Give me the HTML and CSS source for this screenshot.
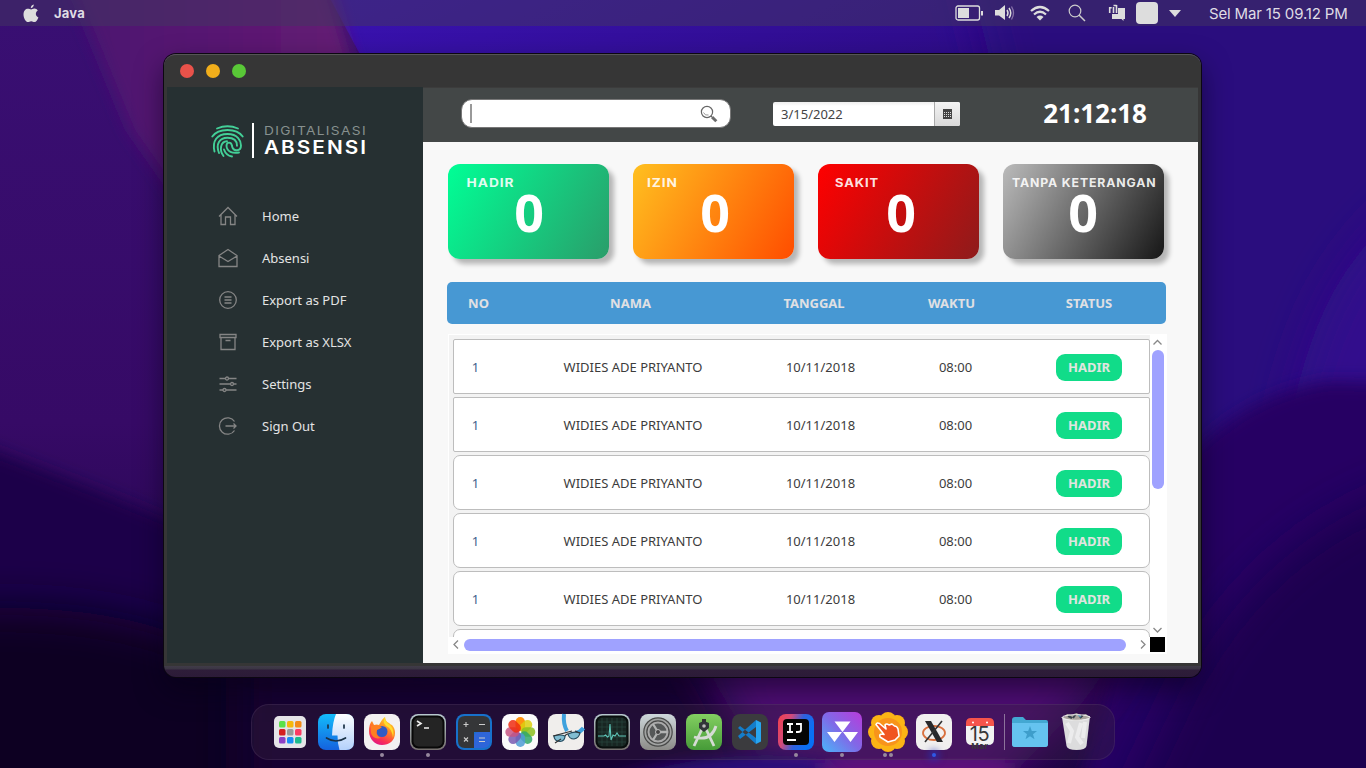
FILE: index.html
```html
<!DOCTYPE html>
<html lang="id">
<head>
<meta charset="utf-8">
<title>Digitalisasi Absensi</title>
<link rel="stylesheet" href="styles.css">
</head>
<body>
<div class="desktop">
<svg class="wallpaper" viewBox="0 0 1366 768" preserveAspectRatio="none" aria-hidden="true">
  <defs>
    <linearGradient id="wl" x1="0" y1="0" x2="0" y2="1"><stop offset="0" stop-color="#390f73"/><stop offset=".55" stop-color="#360a66"/><stop offset="1" stop-color="#1b0442"/></linearGradient>
    <linearGradient id="wr" x1="0" y1="0" x2="1" y2="1"><stop offset="0" stop-color="#3a12b4"/><stop offset=".45" stop-color="#2c0b80"/><stop offset="1" stop-color="#2d0d7d"/></linearGradient>
    <linearGradient id="wm" x1="0" y1="0" x2="1" y2="0"><stop offset="0" stop-color="#4a1270"/><stop offset=".6" stop-color="#621b73"/><stop offset="1" stop-color="#74266f"/></linearGradient>
    <filter id="b6" x="-20%" y="-20%" width="140%" height="140%"><feGaussianBlur stdDeviation="8"/></filter>
    <filter id="b14" x="-60%" y="-60%" width="220%" height="220%"><feGaussianBlur stdDeviation="22"/></filter>
  </defs>
  <rect width="1366" height="768" fill="url(#wl)"/>
  <path d="M320-20H1400V500H600Z" fill="url(#wr)"/>
  <path d="M960-60H1440V500H1100Z" fill="#2c0a7e" filter="url(#b14)"/>
  <path d="M60-40H322L352 60 500 300H250L130 130Z" fill="url(#wm)" filter="url(#b6)"/>
  <path d="M1440 180Q1350 240 1316 330T1290 480H1440Z" fill="#33118c" filter="url(#b14)"/>
  <path d="M1160 490Q1230 395 1330 381L1440 384V860H1060Z" fill="#260663" filter="url(#b6)"/>
  <path d="M1180 690Q1270 520 1440 480V860H1100Z" fill="#1c0450" filter="url(#b14)"/>
  <path d="M-60 430Q70 478 170 520L400 650 440 860H-60Z" fill="#1d0448" filter="url(#b6)"/>
  <path d="M-60 610Q100 600 190 640L520 700V860H-60Z" fill="#0e0223" filter="url(#b14)"/>
  <path d="M240 660H700L780 860H240Z" fill="#140330" filter="url(#b14)"/>
  <path d="M690 640H1130L1080 705 930 860H820Z" fill="#4f0f74" filter="url(#b14)"/>
  <path d="M560 800Q700 740 830 760L870 800Z" fill="#2c087c" filter="url(#b6)"/>
  <path d="M820 763H1010V790H820Z" fill="#63127e" filter="url(#b6)"/>
</svg>

<header class="menubar">
  <svg class="apple" viewBox="0 0 16 19"><path d="M10.800.5c.1 1.600-1.200 3.600-3 3.800C7.600 2.600 9 .8 10.800.5ZM8.100 5.500c.8 0 1.700-.9 3.300-.9 1.500 0 2.700.8 3.400 1.900-2.900 1.800-2.400 5.700.6 6.900-.7 2.100-2.100 4.600-3.900 4.700-1.300 0-1.700-.8-3.300-.8s-2 .8-3.200.8C2.500 18 .5 13.900.5 10.500c0-3.700 2.200-5.700 4.400-5.700 1.400 0 2.400.7 3.200.7Z"/></svg>
  <span class="app-name">Java</span>
  <div class="tray">
    <svg width="29" height="18" viewBox="0 0 29 18"><rect x="1" y="2" width="23.500" height="14" rx="2" fill="none" stroke="#ddd" stroke-width="1.300"/><rect x="3" y="4" width="11" height="10" fill="#ddd"/><rect x="26" y="7" width="2" height="4.500" fill="#ddd"/></svg>
    <svg width="20" height="18" viewBox="0 0 20 18"><path d="M0 6h4l6-5v15l-6-4.500H0Z" fill="#ddd"/><path d="M12 6q2 3 0 6M14 4q3.500 5 0 10" fill="none" stroke="#ddd" stroke-width="1.500"/><path d="M16.500 2.500q4 6.500 0 13" fill="none" stroke="#8773a8" stroke-width="1.300"/></svg>
    <svg width="20" height="18" viewBox="0 0 20 18"><path d="M1 7q9-8 18 0M4 10.500q6-5.500 12 0" fill="none" stroke="#ddd" stroke-width="2.200"/><path d="M6.500 13q3.500-2.800 7 0L10 16.500Z" fill="#ddd"/></svg>
    <svg width="18" height="18" viewBox="0 0 18 18"><circle cx="7" cy="7" r="5.800" fill="none" stroke="#ccc" stroke-width="1.200"/><path d="m11 11 6 6" stroke="#ccc" stroke-width="1.500"/></svg>
    <svg width="18" height="18" viewBox="0 0 18 18"><path d="M10 4h7v11h-1.500v2l-2-2H4v-5h6Z" fill="#ddd"/><path d="M1.700 9V3.700h2M5.500 3v6M5.500 1.500h3M8.500 1v8" fill="none" stroke="#ddd" stroke-width="1.600"/></svg>
    <i class="tray-box"></i>
    <svg width="12" height="7" viewBox="0 0 12 7"><path d="M0 0h12L6 7Z" fill="#ddd"/></svg>
  </div>
  <time class="clock">Sel Mar 15 09.12 PM</time>
</header>

<main class="window">
  <div class="titlebar"><i class="light close"></i><i class="light minimize"></i><i class="light maximize"></i></div>
  <div class="frame">
    <aside class="sidebar">
      <svg class="logo" viewBox="0 0 156 36">
        <g fill="none" stroke="#43cf97" stroke-width="1.900" stroke-linecap="round">
          <path d="M6 5.500Q16.500 1 27 5.500"/>
          <path d="M1.300 13.500Q6 7 16.500 7T31.700 13.500"/>
          <path d="M3.500 28.500C1 18 6 11 16.500 11S30 18 30 22.500C30 28.500 22 29 21 23 20.500 18.500 15.500 18.500 15.500 23 16 29 21.500 30.500 28 29.500"/>
          <path d="M8 30C4.500 21 8.500 14.800 16.500 14.800S26 19.500 26 22.800"/>
          <path d="M12.500 33C8 27 9.500 18.500 16 18.300"/>
          <path d="M13 26.500Q15 32.500 21 33.500"/>
        </g>
        <rect x="41" y="0" width="2" height="35" fill="#fff"/>
        <text x="53" y="12" class="logo-top" textLength="103" lengthAdjust="spacingAndGlyphs">DIGITALISASI</text>
        <text x="53" y="31" class="logo-bottom" textLength="104" lengthAdjust="spacingAndGlyphs">ABSENSI</text>
      </svg>
      <nav class="menu">
        <a class="menu-item"><svg viewBox="0 0 20 20"><path d="M1 10.500 10 1.500l9 9M3 9v9.500h4.500V11h5v7.500H17V9"/></svg>Home</a>
        <a class="menu-item"><svg viewBox="0 0 20 20"><path d="M1 7.500 10 1.500l9 6v11H1ZM1 8l9 5.500L19 8"/></svg>Absensi</a>
        <a class="menu-item"><svg viewBox="0 0 20 20"><circle cx="10" cy="10" r="8.300"/><path d="M6.500 7h7M6.500 10h7M6.500 13h7"/></svg>Export as PDF</a>
        <a class="menu-item"><svg viewBox="0 0 20 20"><path d="M2 2.500h16v3H2ZM3 5.500h14v12H3ZM7.500 8.500h5"/></svg>Export as XLSX</a>
        <a class="menu-item"><svg viewBox="0 0 20 20"><path d="M1.500 4.500H7.500M10.500 4.500h8M1.500 10H12.500M15.500 10h3M1.500 16H5M8 16h10.500"/><circle cx="9" cy="4.500" r="1.500"/><circle cx="14" cy="10" r="1.500"/><circle cx="6.500" cy="16" r="1.500"/></svg>Settings</a>
        <a class="menu-item"><svg viewBox="0 0 20 20"><path d="M16.500 5.500A8.200 8.200 0 1 0 16.500 14.500M7.500 10h10.500M15.500 7.500 18 10l-2.500 2.500"/></svg>Sign Out</a>
      </nav>
    </aside>

    <section class="content">
      <div class="topbar">
        <div class="search"><i class="caret"></i><svg viewBox="0 0 18 18"><circle cx="7" cy="7" r="5.600" fill="#fff" stroke="#666" stroke-width="1.200"/><path d="M3.500 7.500Q5 11 8.500 10" fill="none" stroke="#999"/><path d="m11 11 1.500 1.500" stroke="#666"/><path d="m12 12 4.300 4.300" stroke="#6b6b6b" stroke-width="3"/></svg></div>
        <div class="date"><span class="date-value">3/15/2022</span><span class="date-button"><svg viewBox="0 0 10 10" shape-rendering="crispEdges"><path d="M0 0h9v10H0Z" fill="#444"/><path d="M1 3.500h8M1 5.500h8M1 7.500h8" stroke="#ddd" stroke-width="1" stroke-dasharray="1 1"/></svg></span></div>
        <div class="time">21:12:18</div>
      </div>

      <div class="cards">
        <div class="card hadir"><svg class="card-label" viewBox="0 0 161 14"><text x="18.500" y="11.500" textLength="48" lengthAdjust="spacingAndGlyphs">HADIR</text></svg><b>0</b></div>
        <div class="card izin"><svg class="card-label" viewBox="0 0 161 14"><text x="14" y="11.500" textLength="31" lengthAdjust="spacingAndGlyphs">IZIN</text></svg><b>0</b></div>
        <div class="card sakit"><svg class="card-label" viewBox="0 0 161 14"><text x="17" y="11.500" textLength="44" lengthAdjust="spacingAndGlyphs">SAKIT</text></svg><b>0</b></div>
        <div class="card tanpa"><svg class="card-label" viewBox="0 0 161 14"><text x="9" y="11.500" textLength="144.500" lengthAdjust="spacingAndGlyphs">TANPA KETERANGAN</text></svg><b>0</b></div>
      </div>

      <div class="table-head"><span>NO</span><span>NAMA</span><span>TANGGAL</span><span>WAKTU</span><span>STATUS</span></div>

      <div class="list">
        <div class="rows">
          <div class="row square"><span>1</span><span>WIDIES ADE PRIYANTO</span><span>10/11/2018</span><span>08:00</span><em>HADIR</em></div>
          <div class="row square"><span>1</span><span>WIDIES ADE PRIYANTO</span><span>10/11/2018</span><span>08:00</span><em>HADIR</em></div>
          <div class="row"><span>1</span><span>WIDIES ADE PRIYANTO</span><span>10/11/2018</span><span>08:00</span><em>HADIR</em></div>
          <div class="row"><span>1</span><span>WIDIES ADE PRIYANTO</span><span>10/11/2018</span><span>08:00</span><em>HADIR</em></div>
          <div class="row"><span>1</span><span>WIDIES ADE PRIYANTO</span><span>10/11/2018</span><span>08:00</span><em>HADIR</em></div>
          <div class="row"></div>
        </div>
        <div class="vbar"><svg viewBox="0 0 15 15"><path d="m3.500 9.500 4-4 4 4"/></svg><i></i><svg viewBox="0 0 15 15"><path d="m3.500 6 4 4 4-4"/></svg></div>
        <div class="hbar"><svg viewBox="0 0 15 15"><path d="m9 3.500-4 4 4 4"/></svg><i></i><svg viewBox="0 0 15 15"><path d="m6 3.500 4 4-4 4"/></svg></div>
        <div class="corner"></div>
      </div>
    </section>
  </div>
</main>

<footer class="dock">
  <div class="dock-item"><svg viewBox="0 0 36 36"><rect x="2" y="2" width="32" height="32" rx="5" fill="#e5e4e8"/>
    <rect x="7" y="7" width="6.500" height="6.500" rx="1.500" fill="#5be04a"/><rect x="15" y="7" width="6.500" height="6.500" rx="1.500" fill="#f5b80d"/><rect x="23" y="7" width="6.500" height="6.500" rx="1.500" fill="#f38b18"/>
    <rect x="7" y="15" width="6.500" height="6.500" rx="1.500" fill="#d51f20"/><rect x="15" y="15" width="6.500" height="6.500" rx="1.500" fill="#999"/><rect x="23" y="15" width="6.500" height="6.500" rx="1.500" fill="#fb3b62"/>
    <rect x="7" y="23" width="6.500" height="6.500" rx="1.500" fill="#8c3fc5"/><rect x="15" y="23" width="6.500" height="6.500" rx="1.500" fill="#188cf5"/><rect x="23" y="23" width="6.500" height="6.500" rx="1.500" fill="#1cba8d"/></svg></div>
  <div class="dock-item"><svg viewBox="0 0 36 36"><defs><linearGradient id="fi" x1="0" y1="0" x2="0" y2="1"><stop stop-color="#13bcfb"/><stop offset="1" stop-color="#1462de"/></linearGradient><linearGradient id="fw" x1="0" y1="0" x2="0" y2="1"><stop stop-color="#fdfeff"/><stop offset="1" stop-color="#b4d1fb"/></linearGradient></defs><rect width="36" height="36" rx="8" fill="url(#fi)"/><path d="M18 0h10q8 0 8 8v20q0 8-8 8h-6.500q-2-6-2-14.500H14Q14.500 8 18 0Z" fill="url(#fw)"/><path d="M10 11v3M26 11v3M8.500 24q9.500 6 19 0" fill="none" stroke="#1a3145" stroke-width="1.700" stroke-linecap="round"/></svg></div>
  <div class="dock-item"><svg viewBox="0 0 36 36"><defs><linearGradient id="ff" x1=".8" y1="0" x2=".3" y2="1"><stop stop-color="#ffe12e"/><stop offset=".45" stop-color="#ff8222"/><stop offset=".8" stop-color="#f92c57"/><stop offset="1" stop-color="#df1888"/></linearGradient></defs><rect width="36" height="36" rx="8" fill="#f3f1f1"/><path d="M5 17Q5 10 8 7l2 4q3-1 5 0 3-6 6-8 0 4 4 6 2 2 3 2 3 3 3 8c0 8-6 12-13 12S5 25 5 17Z" fill="url(#ff)"/><circle cx="18" cy="17.500" r="5.500" fill="#315bc4"/><path d="M7 12q5-2 11 1-2 2-5 3-2 6 4 8-8 2-10-5Z" fill="#ff7f22"/><path d="M21 3q0 5 5 8 5 5 3 13-1-10-7-12-4-4-1-9Z" fill="#ffdc2b"/></svg><i class="dots"></i></div>
  <div class="dock-item"><svg viewBox="0 0 36 36"><defs><linearGradient id="metal" x2="0" y2="1"><stop stop-color="#b8c9cf"/><stop offset="1" stop-color="#77716f"/></linearGradient></defs><rect width="36" height="36" rx="8" fill="url(#metal)"/><rect x="1.500" y="1.500" width="33" height="33" rx="7" fill="#080808"/><rect x="3.500" y="3.500" width="29" height="29" rx="5" fill="#242424"/><path d="m7 7 4 2.500L7 12M14 14h5" fill="none" stroke="#eee" stroke-width="1.600"/></svg><i class="dots"></i></div>
  <div class="dock-item"><svg viewBox="0 0 36 36"><rect width="36" height="36" rx="8" fill="#1771cb"/><path d="M2 9q0-7 7-7h18q7 0 7 7v9H18v16H9q-7 0-7-7Z" fill="#353638"/><path d="M18 34V23q0-5 5-5h11v9q0 7-7 7Z" fill="#2e65d9"/><path d="M7.500 10.500h5M10 8v5M23 10.500h6M8 23.500l4 4M12 23.500l-4 4M23 24h6M23 27.500h6" stroke="#ccc" stroke-width="1.100"/></svg></div>
  <div class="dock-item"><svg viewBox="0 0 36 36"><rect width="36" height="36" rx="8" fill="#fbfbfb"/><g><rect x="13.500" y="3" width="9.500" height="14" rx="4.700" fill="#ff9210"/><rect x="13.500" y="3" width="9.500" height="14" rx="4.700" fill="#ddcf10" fill-opacity=".85" transform="rotate(45 18.300 18)"/><rect x="13.500" y="3" width="9.500" height="14" rx="4.700" fill="#8cc01e" fill-opacity=".85" transform="rotate(90 18.300 18)"/><rect x="13.500" y="3" width="9.500" height="14" rx="4.700" fill="#30a868" fill-opacity=".85" transform="rotate(135 18.300 18)"/><rect x="13.500" y="3" width="9.500" height="14" rx="4.700" fill="#4c9bd4" fill-opacity=".85" transform="rotate(180 18.300 18)"/><rect x="13.500" y="3" width="9.500" height="14" rx="4.700" fill="#7759b0" fill-opacity=".85" transform="rotate(225 18.300 18)"/><rect x="13.500" y="3" width="9.500" height="14" rx="4.700" fill="#c65383" fill-opacity=".85" transform="rotate(270 18.300 18)"/><rect x="13.500" y="3" width="9.500" height="14" rx="4.700" fill="#ee2d12" fill-opacity=".85" transform="rotate(315 18.300 18)"/></g></svg></div>
  <div class="dock-item"><svg viewBox="0 0 36 36"><rect width="36" height="36" rx="8" fill="#f0eeec"/><path d="M16 0q-1 10 3 17M35.500 14q-3 4-8 5" fill="none" stroke="#3ea1dd" stroke-width="4"/><path d="M6 22q6-2 11 0 0 5-5 5.500Q6 27 6 22ZM20 20q6-3 12-1-1 5-6 6-5 0-6-5Z" fill="#81bdd2" stroke="#234b60" stroke-width="1.200"/><path d="M17 22q1-2 3-2M5 22l19-5M32 19l-5-2M13 25l-6 4" fill="none" stroke="#333" stroke-width="1.200"/></svg></div>
  <div class="dock-item"><svg viewBox="0 0 36 36"><rect width="36" height="36" rx="8" fill="url(#metal)"/><rect x="1.500" y="1.500" width="33" height="33" rx="7" fill="#080e0d"/><rect x="3.500" y="3.500" width="29" height="29" rx="5" fill="#182522"/><path d="M8 4v28M13 4v28M18 4v28M23 4v28M28 4v28M4 8h28M4 13h28M4 18h28M4 23h28M4 28h28" stroke="#29463e" stroke-width=".7"/><path d="M4 22h6l1.500-1 2 2 1.500-1 1-12 1 16 2-5 2 1 2-3 2 3h7" fill="none" stroke="#5ec5b8" stroke-width="1.100"/></svg></div>
  <div class="dock-item"><svg viewBox="0 0 36 36"><defs><linearGradient id="se" x2="0" y2="1"><stop stop-color="#ced7db"/><stop offset="1" stop-color="#8b8b87"/></linearGradient></defs><rect width="36" height="36" rx="8" fill="url(#se)"/><circle cx="18" cy="18" r="14.800" fill="#484948"/><circle cx="18" cy="18" r="12.700" fill="none" stroke="#a1a3a2" stroke-width="1.800"/><circle cx="18" cy="18" r="9.500" fill="#555858" stroke="#aaa" stroke-width="2"/><path d="M18 18h9.500M18 18l-5-8M18 18l-5 8" stroke="#b2b4b3" stroke-width="2.300"/><circle cx="18" cy="18" r="2.500" fill="#444" stroke="#bbb"/></svg></div>
  <div class="dock-item"><svg viewBox="0 0 36 36"><defs><linearGradient id="as" x2="0" y2="1"><stop stop-color="#83cf61"/><stop offset="1" stop-color="#469b38"/></linearGradient></defs><rect width="36" height="36" rx="8" fill="url(#as)"/><path d="M16 15 8 32M20 15l8 17M8 23q17 5 22-11" fill="none" stroke="#d5dbd4" stroke-width="2.800"/><rect x="16" y="5" width="4" height="6" fill="#333"/><path d="m13 9 5-2 5 2v5l-5 4-5-4Z" fill="#303738"/><circle cx="18" cy="12" r="1.800" fill="#bbb"/></svg></div>
  <div class="dock-item"><svg viewBox="0 0 36 36"><rect width="36" height="36" rx="8" fill="#3b3b3e"/><path d="m24 6 5 2.500v19L24 30Z" fill="#28a5ee"/><path d="m6 14 2-2 16 12v6ZM6 22l2 3L24 13V6Z" fill="#147dca"/></svg></div>
  <div class="dock-item"><svg viewBox="0 0 36 36"><defs><linearGradient id="ij" x1="0" y1="0" x2="1" y2=".35"><stop stop-color="#f5404a"/><stop offset=".35" stop-color="#d24a7b"/><stop offset=".65" stop-color="#3260dc"/><stop offset="1" stop-color="#0870f5"/></linearGradient></defs><rect width="36" height="36" rx="8" fill="url(#ij)"/><rect x="5" y="5" width="26" height="26" rx="4" fill="#050505"/><path d="M9 10h6M12 10v8M9 18h6M18 10h5v6q0 2-3 2h-2M9 26h9" fill="none" stroke="#fff" stroke-width="1.800"/></svg><i class="dots"></i></div>
  <div class="dock-item"><svg class="large" viewBox="0 0 40 40"><defs><linearGradient id="tri" x1="1" y1="0" x2="0" y2="1"><stop stop-color="#b83bdb"/><stop offset=".5" stop-color="#8069e7"/><stop offset="1" stop-color="#49b5fa"/></linearGradient></defs><rect width="40" height="40" rx="7" fill="url(#tri)"/><path d="M12.500 9.500h16L20.500 20ZM5 20h15L12.500 30ZM21 20h15L28.500 30Z" fill="#fff"/></svg><i class="dots"></i></div>
  <div class="dock-item"><svg class="large" viewBox="0 0 40 40"><g fill="#fcb415"><circle cx="20" cy="8" r="8"/><circle cx="20" cy="32" r="8"/><circle cx="8" cy="20" r="8"/><circle cx="32" cy="20" r="8"/><circle cx="11" cy="11" r="8"/><circle cx="29" cy="11" r="8"/><circle cx="11" cy="29" r="8"/><circle cx="29" cy="29" r="8"/></g><circle cx="20" cy="20" r="14" fill="#f8941b"/><path d="M8 12.500Q9 10 11.500 11.500L18 17 17 13Q18.500 11 21 13L24 12 26.500 14Q29 14 30 17L31 24 27 28 20 30 12 25Q11 22 14 22L16 22.500Z" fill="#f0551f" stroke="#fff" stroke-width="1.600" stroke-linejoin="round"/></svg><i class="dots two"></i></div>
  <div class="dock-item"><svg viewBox="0 0 36 36"><rect width="36" height="36" rx="8" fill="#f1f0ef"/><ellipse cx="18" cy="19" rx="11" ry="7" fill="none" stroke="#d9703d" stroke-width="1.800"/><path d="M9 7h6l12 21h-6Z" fill="#28292b"/><path d="M26 7 9 28" stroke="#333" stroke-width="1.600"/></svg><i class="dots active"></i></div>
  <div class="dock-item"><svg viewBox="0 0 36 36"><path d="M4 12h28v13q0 6-6 6H10q-6 0-6-6Z" fill="#f2f2f2"/><path d="M4 12V9q0-5 5-5h18q5 0 5 5v3Z" fill="#f6544b"/><circle cx="11" cy="8.500" r="1" fill="#fff"/><circle cx="25" cy="8.500" r="1" fill="#fff"/><text x="17.500" y="27" class="day">15</text><text x="17.500" y="35" class="month">Mar</text></svg></div>
  <i class="separator"></i>
  <div class="dock-item"><svg viewBox="0 0 36 36"><path d="M0 6q0-3 3-3h8l3 3h20q2 0 2 2v22q0 3-3 3H3q-3 0-3-3Z" fill="#43a8d2"/><path d="M0 9h36v21q0 3-3 3H3q-3 0-3-3Z" fill="#65c3ef"/><path d="m18 12 1.800 5h5.200l-4 3.200 1.500 5-4.500-3-4.500 3 1.500-5-4-3.200h5.200Z" fill="#3e9ecb"/></svg></div>
  <div class="dock-item"><svg class="large" viewBox="0 0 40 40"><path d="m6 5 28-1-3.500 30q-1 4-10 4t-10-4Z" fill="#dcdcdd"/><path d="m11 11 5 8-3 12M25 11l-4 14 5 7M29 10l-2 16" fill="none" stroke="#ececed" stroke-width="4"/><path d="m7 6 4-4 5 1 4-2 5 2 5-1 4 4-14 3Z" fill="#aaa49d"/><path d="m12 4 4 2M20 2l-3 4M27 3l-3 3" stroke="#39434c" stroke-width="2"/><path d="m22 3 3 2" stroke="#4a91b0" stroke-width="1.500"/><ellipse cx="20" cy="5.500" rx="14" ry="2.800" fill="none" stroke="#eee"/></svg></div>
</footer>
</div>
</body>
</html>
```
FILE: styles.css
```css
* { box-sizing: border-box; }
body { margin: 0; font-family: "Noto Sans", sans-serif; }
svg { display: block; flex: none; }
i, em { font-style: normal; }

.desktop {
  position: relative;
  width: 1366px;
  height: 768px;
  overflow: hidden;
  display: flex;
  flex-direction: column;
  align-items: center;
  isolation: isolate;
}
.wallpaper { position: absolute; inset: 0; width: 100%; height: 100%; z-index: -1; }

/* Menu bar */
.menubar {
  width: 100%;
  height: 26px;
  flex: none;
  display: flex;
  align-items: center;
  padding: 0 18px 0 23px;
  background: rgba(66, 54, 96, .5);
  color: #dfdce4;
  font-family: Inter, sans-serif;
}
.apple { width: 16px; height: 19px; fill: #ddd; }
.app-name { margin-left: 15px; font-size: 13px; font-weight: 700; letter-spacing: .2px; }
.tray { margin-left: auto; display: flex; align-items: center; }
.tray svg:first-child { margin-left: -1px; }
.tray svg:nth-child(2) { margin-left: 11px; }
.tray svg:nth-child(3) { margin-left: 15px; }
.tray svg:nth-child(4) { margin-left: 18px; }
.tray svg:nth-child(5) { margin-left: 22px; }
.tray-box { width: 22px; height: 22px; margin: 0 11px 0 10px; border-radius: 4px; background: #ddd; }
.clock { margin-left: 28px; width: 139px; font-size: 15px; letter-spacing: -.15px; white-space: nowrap; }

/* Application window */
.window {
  width: 1037px;
  height: 623px;
  flex: none;
  margin: 28px 1px 0 0;
  border-radius: 12px;
  overflow: hidden;
  background: linear-gradient(#363636 611px, #403c48 611px, #3b3544 614px, #2e1d39 615px, #2c1b38);
  box-shadow: 0 0 0 1px #0c0711, 0 12px 28px rgba(5, 0, 20, .55);
  border-top: 1px solid #555;
}
.titlebar { height: 32px; display: flex; align-items: center; gap: 12px; padding-left: 16px; }
.light { width: 14px; height: 14px; border-radius: 50%; }
.close { background: #e9524a; }
.minimize { background: #f1ae1b; }
.maximize { background: #59c837; }
.frame { display: flex; height: 576px; margin: 0 3px; }

.sidebar { width: 256px; background: #263032; flex: none; padding-top: 36px; }
.logo { width: 156px; height: 36px; margin-left: 44px; overflow: visible; }
.logo text { font-family: Inter, sans-serif; }
.logo-top { font-size: 12px; fill: #87908f; letter-spacing: 1.200px; }
.logo-bottom { font-size: 18.500px; font-weight: 600; fill: #fff; letter-spacing: 1.800px; }
.menu { margin-top: 36px; }
.menu-item { display: flex; align-items: center; height: 42px; padding-left: 51px; gap: 24px; color: #e4e4e4; font-size: 13px; }
.menu-item svg { width: 20px; height: 20px; fill: none; stroke: #858585; stroke-width: 1.300; }

.content { flex: 1; background: #f8f8f8; }
.topbar { height: 55px; background: #434747; display: flex; align-items: center; padding: 0 51px 2px 38px; border-top: 1px solid #3c3c3c; }
.search {
  width: 270px; height: 29px; margin-top: -1px; border: 1px solid #777; border-radius: 11px; background: #fff;
  display: flex; align-items: center; padding: 0 12px 0 8px;
}
.caret { width: 2px; height: 19px; background: #999; }
.search svg { width: 18px; height: 18px; margin-left: auto; }
.date { width: 187px; height: 24px; margin-left: 42px; display: flex; border-radius: 2px; overflow: hidden; background: linear-gradient(#eee, #fff 4px); }
.date-value { flex: 1; padding-left: 8px; font-size: 13px; line-height: 24px; color: #444; }
.date-button { width: 26px; border-left: 1px solid #aaa; background: linear-gradient(#f3f3f3, #d9d9d9); display: flex; align-items: center; padding-left: 8px; }
.date-button svg { width: 10px; height: 10px; }
.time { margin: -2px 0 0 auto; color: #fff; font-size: 26px; font-weight: 700; line-height: 30px; }

.cards { display: flex; gap: 24px; padding: 22px 0 0 25px; }
.card { width: 161px; height: 95px; border-radius: 12px; color: #fff; text-align: center; box-shadow: 5px 5px 5px rgba(0, 0, 0, .27); padding-top: 11px; }
.card b { display: block; font-size: 52px; line-height: 50px; margin-top: -2px; }
.card-label { width: 161px; height: 14px; }
.card-label text { font: 700 11.500px Inter, sans-serif; fill: #fff; fill-opacity: .9; letter-spacing: .8px; }
.hadir { background: linear-gradient(120deg, #00ff96, #2a9d6a); }
.hadir b { padding-left: 1px; }
.izin { background: linear-gradient(120deg, #ffc020, #ff4d00); }
.izin b { padding-left: 3px; }
.sakit { background: linear-gradient(120deg, #f00, #8e1b1b); }
.sakit b { padding-left: 5px; }
.tanpa { background: linear-gradient(120deg, #bbb, #161616); }
.tanpa b { padding-right: 1px; }

.table-head {
  display: grid; grid-template-columns: 63px 241px 126px 149px 126px;
  width: 719px; height: 42px; margin: 23px 0 0 24px; border-radius: 5px; background: #4798d3;
  color: #e0e0e3; font-size: 13px; font-weight: 700; line-height: 42px; text-align: center;
}
.list {
  display: grid; grid-template: 302px 16px / 701px 16px;
  width: 719px; height: 320px; margin: 10px 0 0 25px; border: 1px solid #fff; background: #fff;
}
.rows { overflow: hidden; background: #f3f3f3; padding: 4px 0 0 4px; display: flex; flex-direction: column; gap: 3px; }
.row {
  display: grid; grid-template-columns: 43px 272px 103px 167px 100px;
  flex: none; height: 55px; align-items: center; text-align: center;
  border: 1px solid #bdbdbd; border-radius: 7px; background: #fff; color: #3c3c3c; font-size: 13px;
}
.square { border-radius: 2px; }
.row span:first-child { color: #3f5f8c; }
.row em { width: 66px; height: 27px; margin-top: 1px; line-height: 27px; border-radius: 9px; background: #11dc89; color: #e0e5e0; font-weight: 700; justify-self: center; }
.vbar, .hbar { display: flex; background: #fff; }
.list svg { width: 15px; height: 15px; fill: none; stroke: #888; stroke-width: 1.300; }
.vbar { flex-direction: column; justify-content: space-between; }
.vbar i { width: 12px; height: 139px; margin: 0 0 133px 2px; flex: none; border-radius: 6px; background: #9fa2ff; }
.hbar i { width: 662px; height: 12px; margin: 2px 9px 0 0; flex: none; border-radius: 6px; background: #9fa2ff; }
.corner { width: 15px; height: 15px; background: #000; }

/* Dock */
.dock {
  width: 864px; height: 56px; flex: none; margin-top: 27px; padding: 0 15px;
  display: flex; border-radius: 18px; background: rgba(55, 35, 65, .36);
  border: 1px solid rgba(115, 90, 135, .2);
}
.dock-item { width: 46px; flex: none; position: relative; display: flex; justify-content: center; padding-top: 9px; }
.dock-item svg { width: 36px; height: 36px; overflow: visible; }
.dock-item .large { width: 40px; height: 40px; margin-top: -2px; }
.dots { position: absolute; top: 48px; width: 4px; height: 4px; border-radius: 50%; background: #97889d; }
.two { box-shadow: 6px 0 #97889d; margin-left: -6px; }
.active { background: #2f58e5; box-shadow: 0 0 6px 4px rgba(35, 52, 190, .5); }
.separator { width: 1px; height: 36px; flex: none; margin: 9px 2px 0 1px; background: #8d739b; }
.day { font: 20px Inter, sans-serif; text-anchor: middle; fill: #383838; letter-spacing: -.5px; }
.month { font: 700 8.500px "Noto Sans", sans-serif; text-anchor: middle; fill: #383838; }
```
